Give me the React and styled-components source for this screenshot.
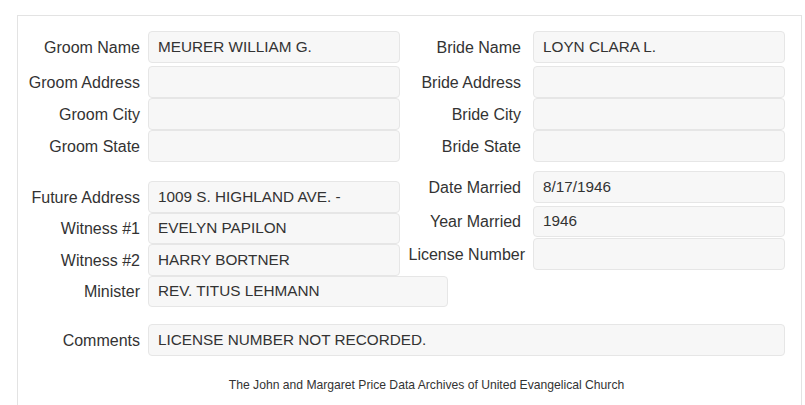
import React from "react";
import styled, { createGlobalStyle } from "styled-components";

const Global = createGlobalStyle`
  html, body { margin: 0; padding: 0; background: #fff; overflow: hidden; }
  body { font-family: "Liberation Sans", Arial, sans-serif; color: #333; }
`;

const Panel = styled.div`
  margin: 15px 3px 0 17px;
  border: 1px solid #e3e3e3;
  border-bottom: none;
  padding: 15px 16px 0 0;
  height: 390px;
  box-sizing: border-box;
`;

const Section = styled.div`
  display: flex;
  gap: 10px;
  margin-top: ${(p) => p.$top || 0}px;
`;

const Column = styled.div`
  width: ${(p) => p.$w}px;
  display: grid;
  grid-template-columns: ${(p) => p.$label}px minmax(0, 1fr);
  column-gap: ${(p) => p.$gap}px;
  align-content: start;
  padding-top: ${(p) => p.$top || 0}px;
`;

const Label = styled.div`
  font-size: 16px;
  color: #333;
  text-align: right;
  white-space: nowrap;
  display: flex;
  align-items: center;
  justify-content: flex-end;
  padding-top: 2px;
  margin-right: ${(p) => p.$pull || 0}px;
  margin-top: ${(p) => p.$mt || 0}px;
`;

const Field = styled.div`
  box-sizing: border-box;
  height: ${(p) => p.$h || 32}px;
  width: ${(p) => (p.$w ? `${p.$w}px` : "auto")};
  background: #f7f7f7;
  border: 1px solid #e6e6e6;
  border-radius: 4px;
  padding: 0 9px;
  font-size: 15.3px;
  color: #333;
  display: flex;
  align-items: center;
  white-space: nowrap;
  margin-top: ${(p) => p.$mt || 0}px;
`;

const Footer = styled.div`
  text-align: center;
  font-size: 12.15px;
  color: #333;
  margin-top: 22px;
  padding-left: 50px;
`;

function Row({ label, value, h, mt, w, pull }) {
  return (
    <>
      <Label $mt={mt} $pull={pull}>{label}</Label>
      <Field $h={h} $mt={mt} $w={w}>{value}</Field>
    </>
  );
}

export default function App() {
  return (
    <>
      <Global />
      <Panel>
        <Section>
          <Column $w={382} $label={122} $gap={8}>
            <Row label="Groom Name" value="MEURER WILLIAM G." />
            <Row label="Groom Address" value="" mt={3} />
            <Row label="Groom City" value="" />
            <Row label="Groom State" value="" />
          </Column>
          <Column $w={375} $label={111} $gap={12}>
            <Row label="Bride Name" value="LOYN CLARA L." />
            <Row label="Bride Address" value="" mt={3} />
            <Row label="Bride City" value="" />
            <Row label="Bride State" value="" />
          </Column>
        </Section>
        <Section>
          <Column $w={382} $label={122} $gap={8} $top={19}>
            <Row label="Future Address" value="1009 S. HIGHLAND AVE. -" h={31.5} />
            <Row label="Witness #1" value="EVELYN PAPILON" h={31.5} />
            <Row label="Witness #2" value="HARRY BORTNER" h={31.5} />
            <Row label="Minister" value="REV. TITUS LEHMANN" h={31.5} w={300} />
          </Column>
          <Column $w={375} $label={111} $gap={12} $top={9}>
            <Row label="Date Married" value="8/17/1946" h={31.5} />
            <Row label="Year Married" value="1946" h={31.5} mt={3} />
            <Row label="License Number" value="" h={31.5} mt={1} pull={-4} />
          </Column>
        </Section>
        <Section $top={17}>
          <Column $w={767} $label={122} $gap={8}>
            <Row label="Comments" value="LICENSE NUMBER NOT RECORDED." />
          </Column>
        </Section>
        <Footer>The John and Margaret Price Data Archives of United Evangelical Church</Footer>
      </Panel>
    </>
  );
}
